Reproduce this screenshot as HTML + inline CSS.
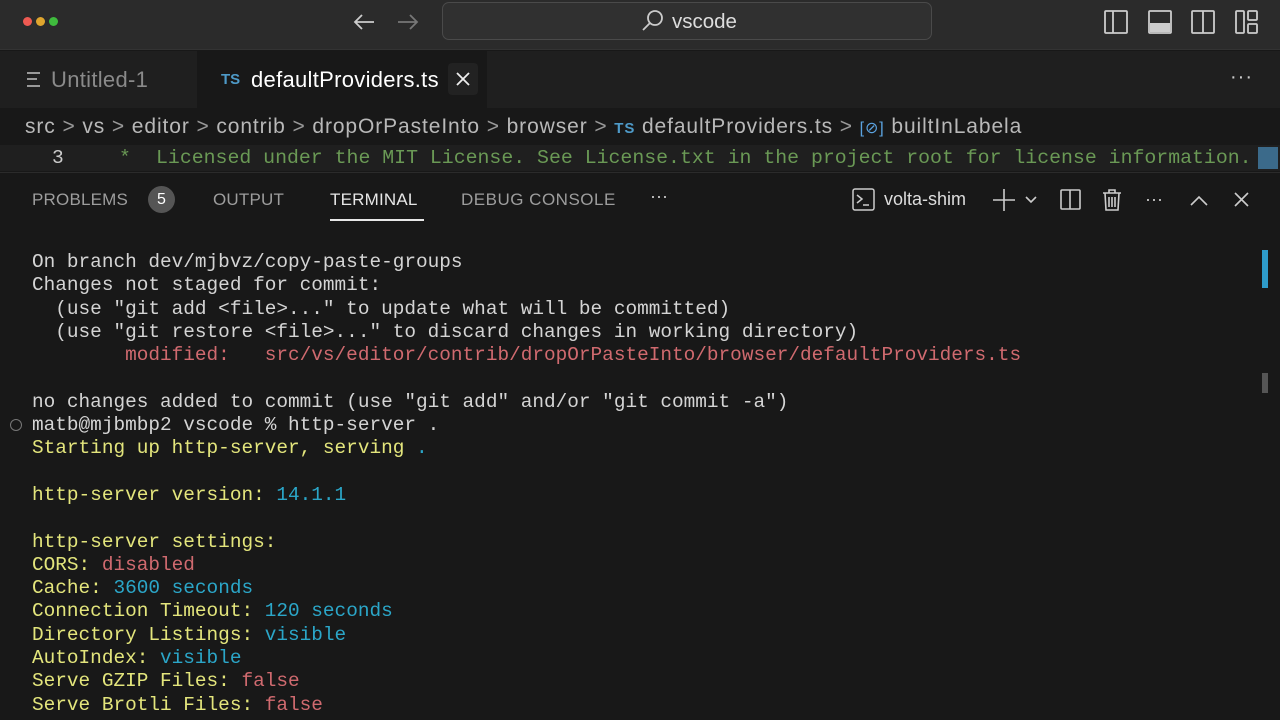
<!DOCTYPE html>
<html><head><meta charset="utf-8"><style>
*{margin:0;padding:0;box-sizing:border-box}
body{width:1280px;height:720px;overflow:hidden;background:#181818;font-family:"Liberation Sans",sans-serif;color:#ccc;position:relative}
.abs{position:absolute}
.mono{font-family:"Liberation Mono",monospace;white-space:pre}
.y{color:#e3e57c}.c{color:#2ba6c8}.r{color:#d06a6f}.w{color:#d4d4d4}
</style></head><body>
<!-- title bar -->
<div class="abs" style="left:0;top:0;width:1280px;height:50px;background:#2b2b2b;border-bottom:1px solid #333"></div>
<div class="abs" style="left:23px;top:17px;width:9px;height:9px;border-radius:50%;background:#ee5a52"></div>
<div class="abs" style="left:36px;top:17px;width:9px;height:9px;border-radius:50%;background:#dfa52e"></div>
<div class="abs" style="left:49px;top:17px;width:9px;height:9px;border-radius:50%;background:#3fbb3d"></div>
<svg class="abs" style="left:352px;top:10px" width="70" height="24" viewBox="0 0 70 24"><path d="M22 12H3M10 5L3 12l7 7" stroke="#ccc" stroke-width="1.8" fill="none"/><path d="M46 12h19M58 5l7 7-7 7" stroke="#777" stroke-width="1.8" fill="none"/></svg>
<div class="abs" style="left:442px;top:2px;width:490px;height:38px;border:1px solid #4a4a4a;border-radius:7px;background:#303030"></div>
<svg class="abs" style="left:640px;top:9px" width="26" height="24" viewBox="0 0 26 24"><circle cx="15" cy="9" r="7" stroke="#ccc" stroke-width="1.8" fill="none"/><path d="M10 14L3 21" stroke="#ccc" stroke-width="1.8"/></svg>
<div class="abs" style="left:672px;top:10px;font-size:20.5px;color:#ddd">vscode</div>
<svg class="abs" style="left:1103px;top:8px" width="160" height="28" viewBox="0 0 160 28">
<g stroke="#ccc" stroke-width="1.8" fill="none"><rect x="2" y="3" width="22" height="22" rx="1"/><path d="M10 3v22"/>
<rect x="46" y="3" width="22" height="22" rx="1"/><rect x="89" y="3" width="22" height="22" rx="1"/><path d="M100 3v22"/>
<rect x="133" y="3" width="8" height="22" rx="1"/><rect x="145" y="3" width="9" height="9" rx="1"/><rect x="145" y="16" width="9" height="9" rx="1"/></g>
<rect x="47" y="15" width="20" height="9" fill="#ccc"/></svg>
<!-- tabs -->
<div class="abs" style="left:0;top:51px;width:1280px;height:57px;background:#1f1f1f"></div>
<div class="abs" style="left:197px;top:51px;width:290px;height:57px;background:#181818"></div>
<div class="abs" style="left:27px;top:72px;width:13px;height:15px;border-top:2px solid #999;border-bottom:2px solid #999"></div>
<div class="abs" style="left:27px;top:78px;width:10px;height:2px;background:#999"></div>
<div class="abs" style="left:51px;top:67px;font-size:22px;color:#8a8a8a;letter-spacing:0.3px">Untitled-1</div>
<div class="abs" style="left:221px;top:71px;font-size:15px;color:#4e9ac8;font-weight:bold">TS</div>
<div class="abs" style="left:251px;top:67px;font-size:22px;color:#fff;letter-spacing:0.3px">defaultProviders.ts</div>
<div class="abs" style="left:448px;top:63px;width:30px;height:32px;background:#222;border-radius:4px"></div>
<svg class="abs" style="left:455px;top:71px" width="16" height="16"><path d="M2 2l12 12M14 2L2 14" stroke="#eee" stroke-width="1.8"/></svg>
<div class="abs" style="left:1230px;top:66px;font-size:20px;color:#ccc;letter-spacing:1px">···</div>
<!-- breadcrumbs -->
<div class="abs" style="left:25px;top:115px;font-size:21px;letter-spacing:0.9px;color:#b8b8b8;white-space:pre">src <span style="color:#999">&gt;</span> vs <span style="color:#999">&gt;</span> editor <span style="color:#999">&gt;</span> contrib <span style="color:#999">&gt;</span> dropOrPasteInto <span style="color:#999">&gt;</span> browser <span style="color:#999">&gt;</span> <span style="color:#4e9ac8;font-size:15px;font-weight:bold">TS</span> defaultProviders.ts <span style="color:#999">&gt;</span> <span style="color:#5ba3e0;font-size:16px">[⊘]</span> builtInLabela</div>
<!-- editor line -->
<div class="abs" style="left:0;top:145px;width:1280px;height:26px;background:#1f1f1f"></div>
<div class="abs mono" style="left:52px;top:145px;font-size:19.5px;line-height:26px;color:#ccc">3</div>
<div class="abs mono" style="left:119px;top:145px;font-size:19.8px;line-height:26px;color:#6a9955">*</div>
<div class="abs mono" style="left:156px;top:145px;font-size:19.85px;line-height:26px;color:#6a9955">Licensed under the MIT License. See License.txt in the project root for license information.</div>
<div class="abs" style="left:1258px;top:147px;width:20px;height:22px;background:#3b6a8a"></div>
<div class="abs" style="left:0;top:172px;width:1280px;height:1px;background:#2b2b2b"></div>
<!-- panel header -->
<div class="abs" style="left:32px;top:190px;font-size:17px;color:#9d9d9d;letter-spacing:0.2px">PROBLEMS</div>
<div class="abs" style="left:148px;top:186px;width:27px;height:27px;border-radius:50%;background:#555;color:#fff;font-size:16px;text-align:center;line-height:27px">5</div>
<div class="abs" style="left:213px;top:190px;font-size:17px;color:#9d9d9d;letter-spacing:0.2px">OUTPUT</div>
<div class="abs" style="left:330px;top:190px;font-size:17px;color:#e7e7e7;letter-spacing:0.2px">TERMINAL</div>
<div class="abs" style="left:330px;top:219px;width:94px;height:2px;background:#e7e7e7"></div>
<div class="abs" style="left:461px;top:190px;font-size:17px;color:#9d9d9d;letter-spacing:0.5px">DEBUG CONSOLE</div>
<div class="abs" style="left:650px;top:186px;font-size:18px;color:#ccc">···</div>
<svg class="abs" style="left:852px;top:188px" width="24" height="24"><rect x="1" y="1" width="21" height="21" rx="2" stroke="#ccc" stroke-width="1.5" fill="none"/><path d="M5 7l5 4-5 4M11 17h6" stroke="#ccc" stroke-width="1.5" fill="none"/></svg>
<div class="abs" style="left:884px;top:189px;font-size:18px;color:#ddd">volta-shim</div>
<svg class="abs" style="left:990px;top:186px" width="270" height="28" viewBox="0 0 270 28">
<g stroke="#ccc" stroke-width="1.6" fill="none"><path d="M14 3v22M3 14h22"/><path d="M36 11l5 5 5-5"/>
<rect x="71" y="4" width="19" height="19" rx="1"/><path d="M80 4v19"/>
<path d="M113 7h18M119 7V4h6v3M115 7l1 17h12l1-17M119 11v10M122 11v10M125 11v10"/>
<path d="M201 19l8-8 8 8"/><path d="M245 7l13 13M258 7l-13 13"/></g>
<text x="155" y="19" fill="#ccc" font-size="18" font-family="Liberation Sans">···</text></svg>
<!-- terminal -->
<div class="abs" style="left:1262px;top:250px;width:6px;height:38px;background:#2e9bc9"></div>
<div class="abs" style="left:1262px;top:373px;width:6px;height:20px;background:#555"></div>
<div class="abs" style="left:10px;top:419px;width:12px;height:12px;border:1.5px solid #777;border-radius:50%"></div>
<div class="abs mono w" style="left:32px;top:251px;font-size:19.4px;line-height:23.3px">On branch dev/mjbvz/copy-paste-groups
Changes not staged for commit:
  (use "git add &lt;file&gt;..." to update what will be committed)
  (use "git restore &lt;file&gt;..." to discard changes in working directory)
<span class="r">        modified:   src/vs/editor/contrib/dropOrPasteInto/browser/defaultProviders.ts</span>

no changes added to commit (use "git add" and/or "git commit -a")
matb@mjbmbp2 vscode % http-server .
<span class="y">Starting up http-server, serving </span><span class="c">.</span>

<span class="y">http-server version: </span><span class="c">14.1.1</span>

<span class="y">http-server settings: </span>
<span class="y">CORS: </span><span class="r">disabled</span>
<span class="y">Cache: </span><span class="c">3600 seconds</span>
<span class="y">Connection Timeout: </span><span class="c">120 seconds</span>
<span class="y">Directory Listings: </span><span class="c">visible</span>
<span class="y">AutoIndex: </span><span class="c">visible</span>
<span class="y">Serve GZIP Files: </span><span class="r">false</span>
<span class="y">Serve Brotli Files: </span><span class="r">false</span></div>
</body></html>
